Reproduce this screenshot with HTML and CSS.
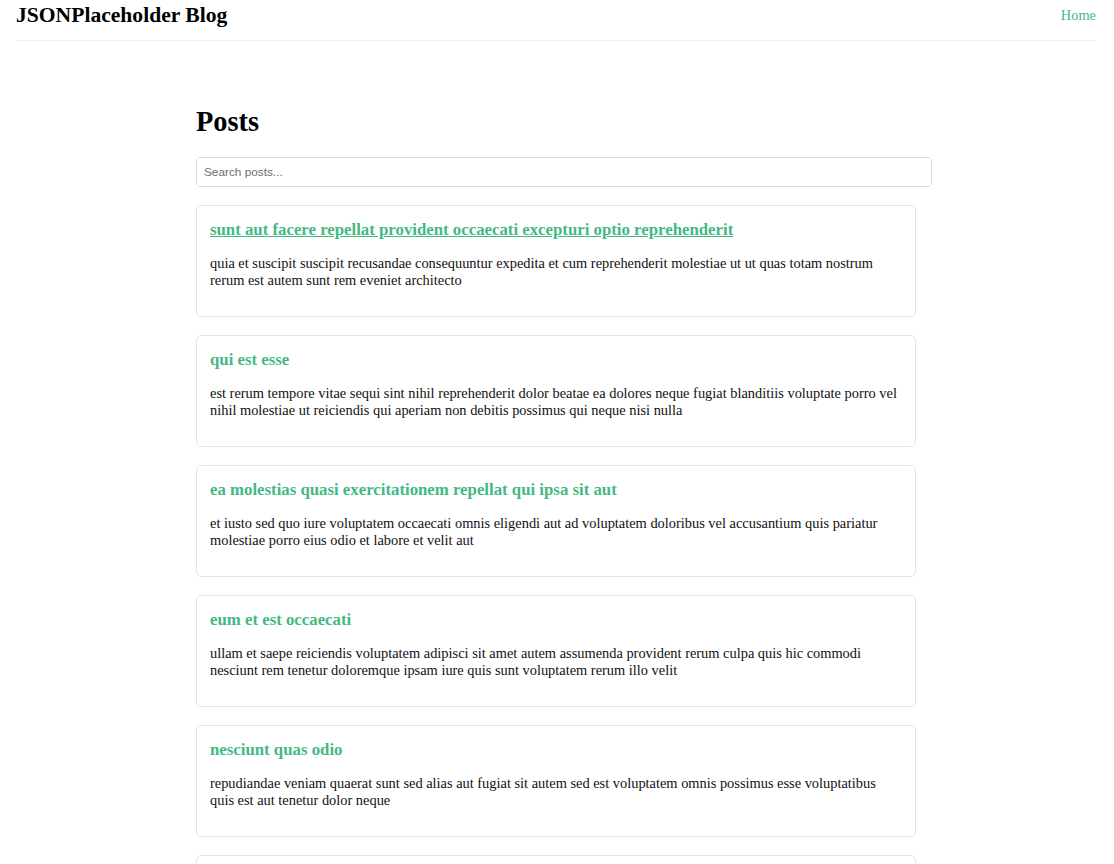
FILE: index.html
```html
<!DOCTYPE html>
<html lang="en">
<head>
<meta charset="utf-8">
<title>JSONPlaceholder Blog</title>
<link rel="stylesheet" href="styles.css">
</head>
<body>
<header class="site-header">
  <div class="brand">JSONPlaceholder Blog</div>
  <nav class="nav"><a href="#" class="nav-link">Home</a></nav>
</header>
<main class="container">
  <h1 class="page-title">Posts</h1>
  <input class="search" type="text" placeholder="Search posts...">
  <div class="post-list">
    <article class="post-card">
      <h2 class="post-title"><a href="#" class="post-link is-hover">sunt aut facere repellat provident occaecati excepturi optio reprehenderit</a></h2>
      <p class="post-body">quia et suscipit suscipit recusandae consequuntur expedita et cum reprehenderit molestiae ut ut quas totam nostrum rerum est autem sunt rem eveniet architecto</p>
    </article>
    <article class="post-card">
      <h2 class="post-title"><a href="#" class="post-link">qui est esse</a></h2>
      <p class="post-body">est rerum tempore vitae sequi sint nihil reprehenderit dolor beatae ea dolores neque fugiat blanditiis voluptate porro vel nihil molestiae ut reiciendis qui aperiam non debitis possimus qui neque nisi nulla</p>
    </article>
    <article class="post-card">
      <h2 class="post-title"><a href="#" class="post-link">ea molestias quasi exercitationem repellat qui ipsa sit aut</a></h2>
      <p class="post-body">et iusto sed quo iure voluptatem occaecati omnis eligendi aut ad voluptatem doloribus vel accusantium quis pariatur molestiae porro eius odio et labore et velit aut</p>
    </article>
    <article class="post-card">
      <h2 class="post-title"><a href="#" class="post-link">eum et est occaecati</a></h2>
      <p class="post-body">ullam et saepe reiciendis voluptatem adipisci sit amet autem assumenda provident rerum culpa quis hic commodi nesciunt rem tenetur doloremque ipsam iure quis sunt voluptatem rerum illo velit</p>
    </article>
    <article class="post-card">
      <h2 class="post-title"><a href="#" class="post-link">nesciunt quas odio</a></h2>
      <p class="post-body">repudiandae veniam quaerat sunt sed alias aut fugiat sit autem sed est voluptatem omnis possimus esse voluptatibus quis est aut tenetur dolor neque</p>
    </article>
    <article class="post-card">
      <h2 class="post-title"><a href="#" class="post-link">dolorem eum magni eos aperiam quia</a></h2>
      <p class="post-body">ut aspernatur corporis harum nihil quis provident sequi mollitia nobis aliquid molestiae perspiciatis et ea nemo ab reprehenderit accusantium quas voluptate dolores velit et doloremque molestiae</p>
    </article>
  </div>
</main>
</body>
</html>
```
FILE: styles.css
```css
* { box-sizing: border-box; }

html, body {
  margin: 0;
  padding: 0;
  background: #ffffff;
  color: #111111;
  font-family: "Liberation Serif", "Times New Roman", serif;
}

.site-header {
  display: flex;
  justify-content: space-between;
  align-items: center;
  margin: 0 18px 0 16px;
  padding: 2px 0 12px;
  border-bottom: 1px solid #efefef;
}

.brand {
  font-size: 21.6px;
  font-weight: bold;
  line-height: 26px;
  color: #000;
}

.nav-link {
  font-size: 14.4px;
  color: #42b983;
  text-decoration: none;
}

.container {
  width: 722px;
  margin: 0 auto;
  padding: 64px 2px 0 0;
}

.page-title {
  font-size: 28.4px;
  font-weight: bold;
  margin: 0 0 18px;
  line-height: 34px;
  color: #000;
}

.search {
  display: block;
  width: 736px;
  height: 30px;
  padding: 7px;
  border: 1px solid #dcdcdc;
  border-radius: 4px;
  font-family: "Liberation Sans", Arial, sans-serif;
  font-size: 11.8px;
  line-height: 14px;
  color: #333;
  margin: 0 0 18px;
  outline: none;
}

.search::placeholder { color: #6f6f6f; }

.post-list {
  display: flex;
  flex-direction: column;
  gap: 18px;
}

.post-card {
  border: 1px solid #e3e3e3;
  border-radius: 5px;
  padding: 14px 13px 12px;
  min-height: 112px;
}

.post-title {
  margin: 0 0 15px;
  font-size: 16.8px;
  line-height: 20px;
  font-weight: bold;
}

.post-link {
  color: #42b983;
  text-decoration: none;
}

.post-link.is-hover { text-decoration: underline; }

.post-body {
  margin: 0 0 15px;
  font-size: 14.4px;
  line-height: 17px;
  color: #111;
}
```
